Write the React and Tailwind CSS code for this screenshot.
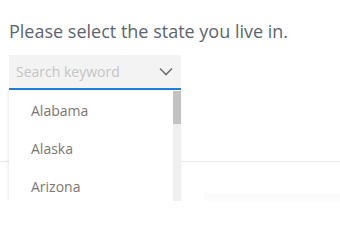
import React from "react";

export default function App() {
  const states = ["Alabama", "Alaska", "Arizona"];
  return (
    <div className="w-[340px] h-[201px] overflow-hidden bg-white relative" style={{ fontFamily: '"Open Sans", "Noto Sans", sans-serif' }}>
      <div className="pl-[9px] pt-[19px]">
        <h1 className="text-[18px] leading-[24px] text-[#5b6570] font-normal">Please select the state you live in.</h1>
        <div className="relative mt-[12px] w-[172px] z-10">
          <div className="h-[35px] bg-[#f3f3f3] border-b-2 border-[#1d7fe0] flex items-center justify-between pl-[7px] pr-[8px]">
            <span className="text-[14px] text-[#c4c4c4] leading-none">Search keyword</span>
            <svg width="14" height="9" viewBox="0 0 14 9" fill="none">
              <path d="M1 1.5 L7 7.5 L13 1.5" stroke="#6e6e6e" strokeWidth="1.6" />
            </svg>
          </div>
          <div className="absolute left-0 top-[36px] w-[172px] h-[116px] overflow-hidden bg-white flex shadow-[-1px_0_3px_rgba(0,0,0,0.08)]">
            <ul className="flex-1 flex flex-col">
              {states.map((s) => (
                <li key={s} className="shrink-0 h-[38px] flex items-center pl-[22px] text-[14px] text-[#7a7672]">{s}</li>
              ))}
            </ul>
            <div className="w-[8px] bg-[#efefef] flex flex-col">
              <div className="h-[33px] bg-[#c2c2c2]" />
            </div>
          </div>
        </div>
      </div>
      <div className="mt-[71px] h-px bg-[#ebebeb]" />
      <div className="mt-[31px] ml-[204px] h-[20px] bg-[#fbfbfb]" />
    </div>
  );
}
